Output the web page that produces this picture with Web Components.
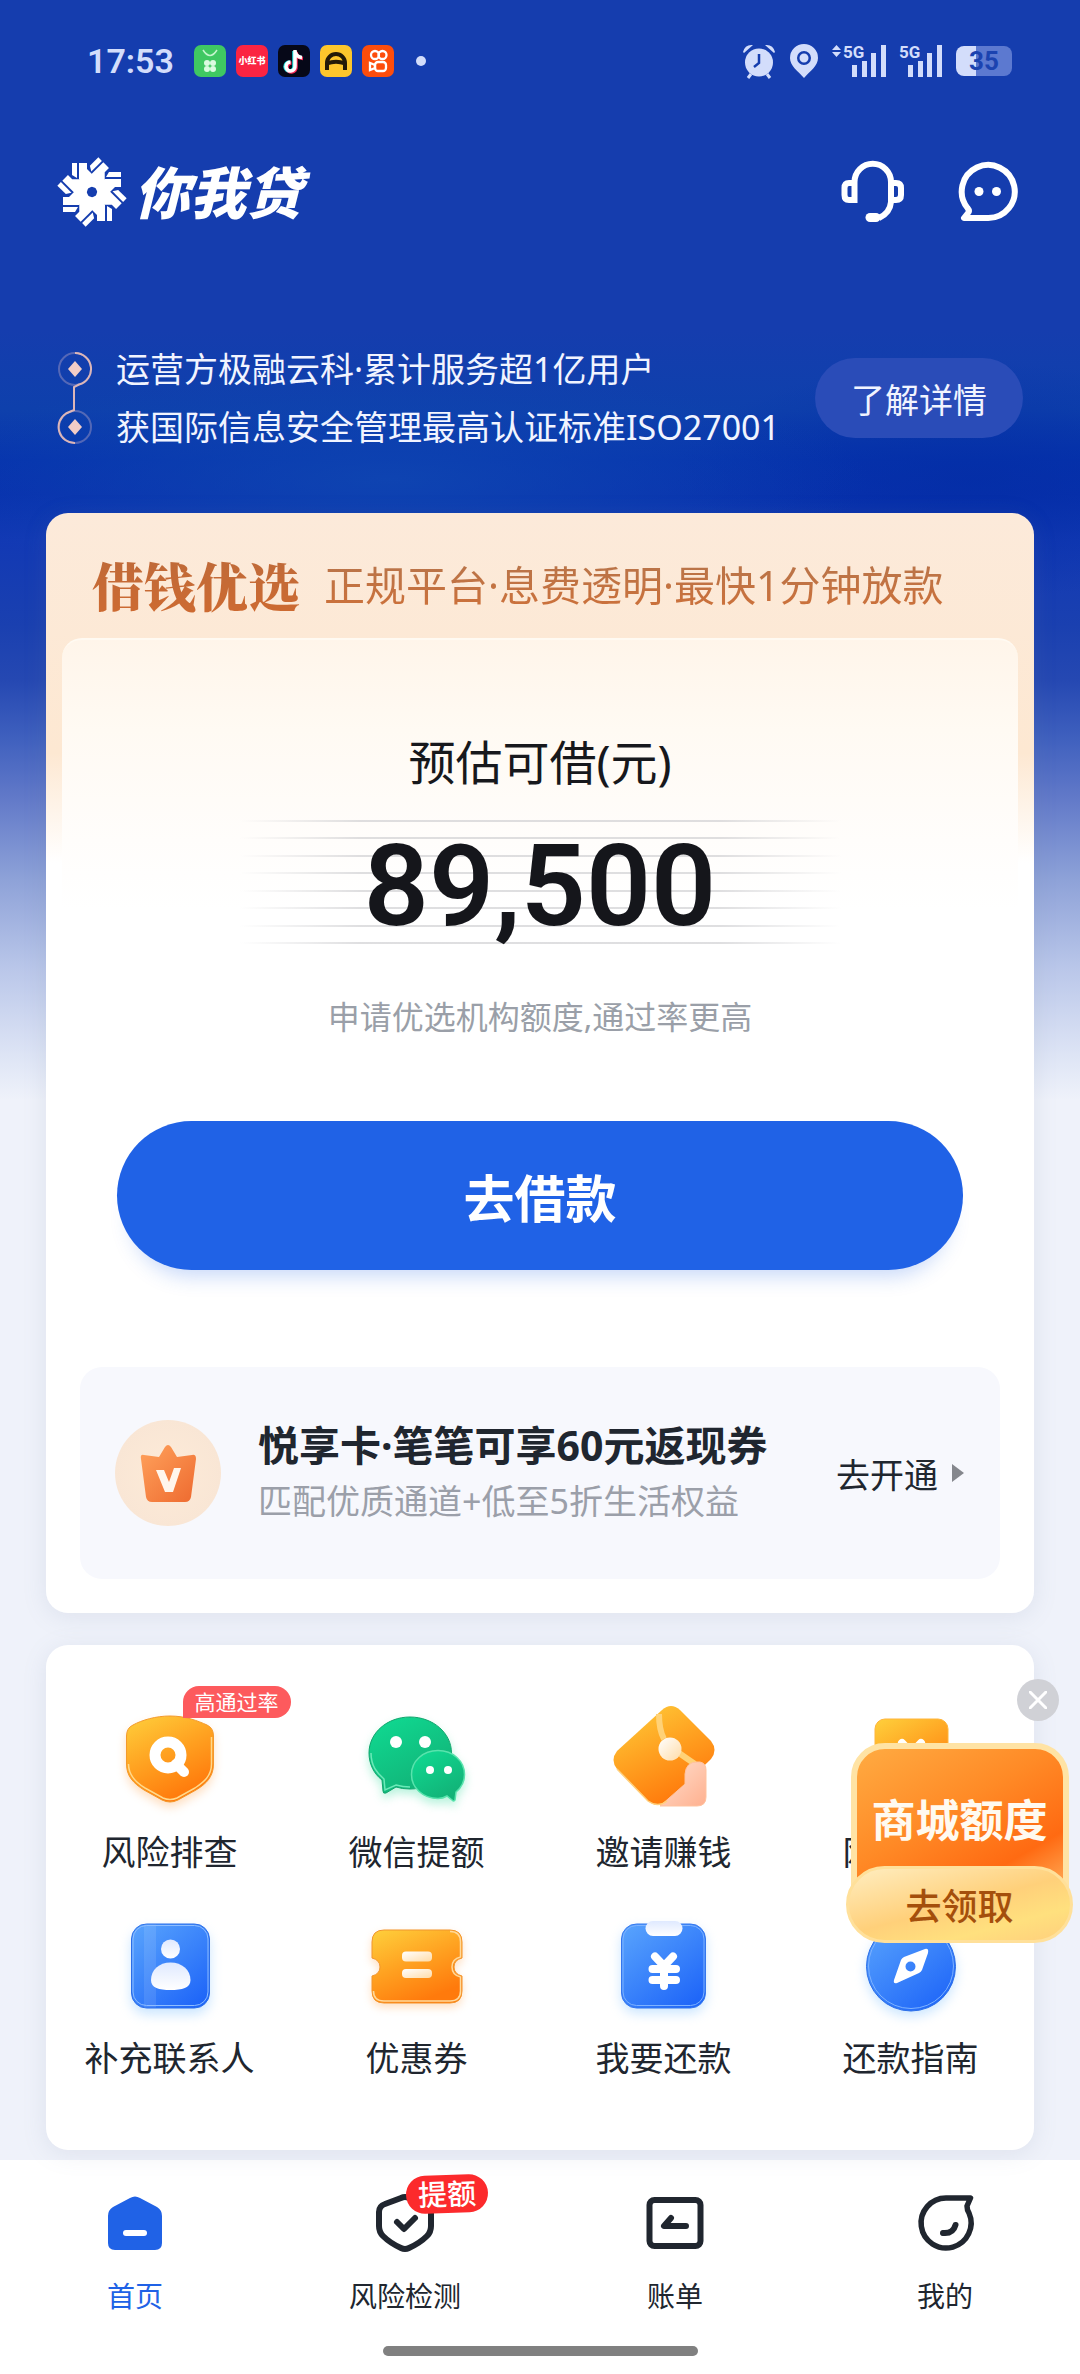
<!DOCTYPE html>
<html lang="zh-CN">
<head>
<meta charset="utf-8">
<meta name="viewport" content="width=device-width, initial-scale=1">
<title>你我贷</title>
<style>
	html, body { margin: 0; }
	body {
		min-height: 100vh;
		background: #eff2fa;
		color: #20262f;
		font-family: "Noto Sans", "Noto Sans CJK SC", sans-serif;
		font-size: 34px;
	}
</style>
</head>
<body>
<loan-home></loan-home>

<script>
(function() {
	function define(name, html) {
		let template = document.createElement("template");
		template.innerHTML = html;
		customElements.define(name, class extends HTMLElement {
			constructor() {
				super();
				this.attachShadow({mode: "open"}).appendChild(template.content.cloneNode(true));
			}
		});
	}

	/* ---------- shared gradients for the service icons ---------- */

	const defs = `
		<defs>
			<linearGradient id="gold" x1="0" y1="0" x2=".5" y2="1">
				<stop offset="0" stop-color="#fed03c"/><stop offset=".5" stop-color="#ffa422"/><stop offset="1" stop-color="#ff7a0c"/>
			</linearGradient>
			<linearGradient id="blue" x1="0" y1="0" x2=".8" y2="1">
				<stop offset="0" stop-color="#5aa5fd"/><stop offset="1" stop-color="#1f66f8"/>
			</linearGradient>
			<linearGradient id="green" x1="0" y1="0" x2=".6" y2="1">
				<stop offset="0" stop-color="#0fdc93"/><stop offset="1" stop-color="#12b277"/>
			</linearGradient>
			<linearGradient id="pale" x1="0" y1="0" x2="0" y2="1">
				<stop offset="0" stop-color="#dfe9ff"/><stop offset="1" stop-color="#ffffff"/>
			</linearGradient>
			<linearGradient id="peach" x1="0" y1="0" x2="1" y2="1">
				<stop offset="0" stop-color="#ffe0cf"/><stop offset="1" stop-color="#ffb08f"/>
			</linearGradient>
			<linearGradient id="cream" x1="0" y1="0" x2="1" y2="1">
				<stop offset="0" stop-color="#ffffff"/><stop offset="1" stop-color="#ffdca8"/>
			</linearGradient>
		</defs>`;

	const icons = {
		shield: `
			<g style="filter:drop-shadow(0 5px 5px #ffb26a66)">
				<path d="M54 10C70 10 82 15 91 19Q97.500 22 97.500 30V58C97.500 71 90 78 80 84L62 94Q54 98 46 94L28 84C17 77 10.500 70 10.500 58V30Q10.500 22 17 19C26 14 40 10 54 10Z" fill="url(#gold)" stroke="#f39a2c"/>
				<path d="M95.500 31V58C95.500 70 88 76 79 82L61 92Q54 95 47 92L29 82C19 76 12.500 69 12.500 58" fill="none" stroke="#ffd98a" stroke-width="1.500"/>
			</g>
			<circle cx="52" cy="49" r="13" fill="none" stroke="#fff" stroke-width="11"/>
			<path d="M60 58L68 66" stroke="#fff" stroke-width="10" stroke-linecap="round"/>`,
		chat: `
			<g style="filter:drop-shadow(0 5px 5px #4fe0a966)">
				<path d="M47 11C70 11 88.500 27 88.500 47S70 83 47 83Q39 83 33 81L23 87Q20 88 20 85L19 74C11 68 6 58 6 47C6 27 24 11 47 11Z" fill="url(#green)" stroke="#12a56d"/>
				<path d="M8 47C8 60 14 67 21 73L22 84L33 79Q40 81 47 81" fill="none" stroke="#6be9b8" stroke-width="1.500"/>
				<path d="M75 44.500C90 44.500 101.500 55 101.500 68.500Q101.500 79 93 86L92 94Q91 96 89 94L84 90Q80 92.500 75 92.500C60 92.500 48.500 82 48.500 68.500S60 44.500 75 44.500Z" fill="url(#green)" stroke="#59e3ad" stroke-width="1.500"/>
			</g>
			<g fill="#fff"><circle cx="33" cy="36" r="6"/><circle cx="62" cy="36" r="6"/><circle cx="67" cy="64" r="4"/><circle cx="85" cy="64" r="4"/></g>`,
		invite: `
			<path d="M52 4Q61 -4 70 4L101 35Q108 44 101 53L58 95Q48 103 38 95L7 63Q0 54 7 45Z" fill="url(#gold)"/>
			<path d="M49 8Q49 24 54 33M69 47Q76 52 85 58" fill="none" stroke="#ffd277" stroke-width="6"/>
			<path d="M50 100L75 78V68Q76 56 87 56H90Q96 57 96 64V91Q96 100 87 100Z" fill="url(#peach)" stroke="#ffc39f"/>
			<path d="M7 63L38 95Q48 102 57 95" fill="none" stroke="#ffd07c" stroke-width="1.500"/>
			<circle cx="60" cy="43" r="11.500" fill="url(#cream)"/>`,
		wallet: `
			<rect x="18" y="13" width="73" height="80" rx="10" fill="url(#gold)" stroke="#ffb53a"/>
			<path d="M45 37L54.500 47L64 37M54.500 47V72M42 51H67M42 61H67" fill="none" stroke="#fff" stroke-width="8" stroke-linecap="round"/>`,
		contact: `
			<g style="filter:drop-shadow(0 6px 6px #7ec0ff66)">
				<rect x="15.500" y="12" width="78" height="84" rx="15" fill="url(#blue)" stroke="#2b6ee8"/>
				<path d="M28 12.500H40V95.500H28Z" fill="#fff" opacity=".1"/>
				<rect x="17" y="13.500" width="75" height="80" rx="13.500" fill="none" stroke="#8dbdff"/>
			</g>
			<circle cx="54.500" cy="37" r="9.500" fill="url(#pale)"/>
			<path d="M54.500 50.500C66 50.500 74.500 58 74.500 68C74.500 76 66 78 54.500 78S35 76 35 68C35 58 43 50.500 54.500 50.500Z" fill="url(#pale)"/>`,
		coupon: `
			<g style="filter:drop-shadow(0 4px 4px #ffb26a66)">
				<path d="M21 18H87Q99 18 99 30V46Q91 48 91 55T99 64V79Q99 91 87 91H21Q9 91 9 79V64Q17 62 17 55T9 46V30Q9 18 21 18Z" fill="url(#gold)" stroke="#f2952c"/>
				<path d="M87 19.500Q97.500 19.500 97.500 30V45Q89 47 89 55T97.500 65V79Q97.500 89 87 89H21Q10.500 89 10.500 79" fill="none" stroke="#ffd99a" stroke-width="1.500"/>
			</g>
			<rect x="39" y="39.500" width="30" height="10" rx="4" fill="url(#cream)"/>
			<rect x="39" y="57" width="30" height="9" rx="4" fill="url(#cream)"/>`,
		repay: `
			<g style="filter:drop-shadow(0 5px 6px #7ec0ff66)">
				<rect x="11.500" y="12" width="84" height="84" rx="15" fill="url(#blue)" stroke="#3376ee"/>
				<rect x="13" y="13.500" width="81" height="80" rx="13.500" fill="none" stroke="#7db2ff"/>
			</g>
			<rect x="35.500" y="9" width="37" height="15" rx="7.500" fill="url(#pale)"/>
			<path d="M45 44.500L54 54L63 44.500M54 54V74M42.500 57H66M42.500 68H66" fill="none" stroke="#fff" stroke-width="8" stroke-linecap="round" stroke-linejoin="round"/>`,
		compass: `
			<g style="filter:drop-shadow(0 5px 6px #7ec0ff66)">
				<circle cx="54" cy="54.500" r="44.500" fill="url(#blue)" stroke="#2b6ee8"/>
				<circle cx="54" cy="54" r="42.500" fill="none" stroke="#7db2ff"/>
			</g>
			<path fill-rule="evenodd" d="M68 37Q72 36 71 41L65 58Q64 60 62 61L40 71Q36 72 37 68L44 48Q45 46 47 45ZM53.500 49.500A5 5 0 1 0 53.500 59.500A5 5 0 1 0 53.500 49.500Z" fill="#fff"/>`,
		home: `
			<path d="M25 5Q30 2 35 5L52 14Q57 17 57 23V50Q57 57 50 57H10Q3 57 3 50V23Q3 17 8 14Z" fill="currentColor"/>
			<path d="M21 40H39" stroke="#fff" stroke-width="6" stroke-linecap="round"/>`,
		check: `
			<path d="M26 5Q30 3 34 5L50 11Q56 13 56 19V33Q56 39 52 43Q45 50 34 55Q30 57 26 55Q15 50 8 43Q4 39 4 33V19Q4 13 10 11Z" fill="none" stroke="currentColor" stroke-width="6"/>
			<path d="M22 29L29 36L40 25" fill="none" stroke="currentColor" stroke-width="6" stroke-linecap="round" stroke-linejoin="round"/>`,
		bill: `
			<rect x="4.500" y="7" width="51" height="46" rx="5" fill="none" stroke="currentColor" stroke-width="6"/>
			<path d="M26 25L19 33H41" fill="none" stroke="currentColor" stroke-width="6" stroke-linecap="round" stroke-linejoin="round"/>`,
		mine: `
			<path d="M55.500 5H31A25 25 0 1 0 54 20Q52 17 52 13Z" fill="none" stroke="currentColor" stroke-width="5.500" stroke-linejoin="round"/>
			<path d="M28 40Q38 41 40.500 32" fill="none" stroke="currentColor" stroke-width="6" stroke-linecap="round"/>`
	};

	/* ---------- icon, picked by name ---------- */

	class UiIcon extends HTMLElement {
		constructor() {
			super();
			this.attachShadow({mode: "open"});
		}

		connectedCallback() {
			let box = this.getAttribute("box") || "108";
			this.shadowRoot.innerHTML = `
				<style>
				:host { display: block; }
				svg { display: block; width: 100%; height: 100%; overflow: visible; }
				</style>
				<svg viewBox="0 0 ${box} ${box}" aria-hidden="true">${box === "108" ? defs : ""}${icons[this.getAttribute("name")]}</svg>`;
		}
	}
	customElements.define("ui-icon", UiIcon);

	/* ---------- phone status bar ---------- */

	define("status-bar", `
		<style>
		:host {
			display: flex;
			align-items: center;
			height: 122px;
			padding: 0 68px 0 87px;
			color: #d3ddfb;
			box-sizing: border-box;
		}
		time { font: 600 34px/40px Roboto, sans-serif; margin-right: 20px; }
		.apps { display: flex; gap: 10px; flex: 1; align-items: center; }
		.apps svg { width: 32px; height: 32px; }
		.red {
			width: 32px;
			height: 32px;
			border-radius: 7px;
			background: #fb2442;
			color: #fff;
			font-size: 9px;
			font-weight: 900;
			line-height: 32px;
			text-align: center;
		}
		.dot { width: 10px; height: 10px; margin-left: 12px; border-radius: 50%; background: currentColor; }
		.sys { display: flex; gap: 14px; align-items: center; }
		.sys svg { display: block; overflow: visible; }
		.battery {
			width: 56px;
			height: 30px;
			border-radius: 8px;
			background: linear-gradient(90deg, #d3ddfb 20px, #5c79d0 20px);
			color: #1b43b0;
			font: 700 26px/30px Roboto, sans-serif;
			text-align: center;
		}
		</style>
		<time>17:53</time>
		<div class="apps">
			<svg viewBox="0 0 32 32"><rect width="32" height="32" rx="7" fill="#3fc862"/><path d="M9 5Q16 16 23 5" fill="none" stroke="#c4f5cd" stroke-width="1.500"/><g fill="#d9fbe0"><circle cx="13" cy="18" r="3"/><circle cx="19" cy="18" r="3"/><circle cx="13" cy="24" r="3"/><circle cx="19" cy="24" r="3"/></g></svg>
			<span class="red">小红书</span>
			<svg viewBox="0 0 32 32"><rect width="32" height="32" rx="7" fill="#060818"/><path d="M17 6V21A4.500 4.500 0 1 1 12.500 17M17 6Q18 12 24 12.500" fill="none" stroke="#25e8e4" stroke-width="3.500" transform="translate(-1 0)"/><path d="M17 6V21A4.500 4.500 0 1 1 12.500 17M17 6Q18 12 24 12.500" fill="none" stroke="#fb2b58" stroke-width="3.500" transform="translate(1 1)"/><path d="M17 5V21A4.500 4.500 0 1 1 12.500 17M17 6Q18 12 24 12.500" fill="none" stroke="#fff" stroke-width="3.500"/></svg>
			<svg viewBox="0 0 32 32"><rect width="32" height="32" rx="7" fill="#fdc62c"/><path d="M7 25V18A9 9 0 0 1 25 18V25M7 18.500Q16 15 25 18.500" fill="none" stroke="#241a08" stroke-width="4"/></svg>
			<svg viewBox="0 0 32 32"><rect width="32" height="32" rx="7" fill="#fd4d0c"/><g fill="none" stroke="#fff" stroke-width="2.300"><circle cx="13" cy="10" r="4"/><circle cx="20.500" cy="10" r="4"/><rect x="13" y="17" width="11" height="9" rx="3"/><path d="M13 20L8 18V25L13 23Z"/></g></svg>
			<span class="dot"></span>
		</div>
		<div class="sys">
			<svg width="34" height="34" viewBox="0 0 34 34"><g fill="currentColor"><circle cx="17" cy="18.500" r="14"/><path d="M1 8Q3 0 11 1L2 9ZM33 8Q31 0 23 1L32 9Z"/></g><path d="M9 30L6 34M25 30L28 34" stroke="currentColor" stroke-width="3"/><path d="M17 10V19L12 23" fill="none" stroke="#153dae" stroke-width="2.500"/></svg>
			<svg width="28" height="34" viewBox="0 0 28 34"><path fill-rule="evenodd" d="M14 0A14 14 0 0 1 28 14C28 22 20 27 14 34C8 27 0 22 0 14A14 14 0 0 1 14 0ZM14 7A7 7 0 1 0 14 21A7 7 0 1 0 14 7ZM14 9.500A4.500 4.500 0 1 1 14 18.500A4.500 4.500 0 1 1 14 9.500Z" fill="currentColor"/></svg>
			<svg width="54" height="34" viewBox="0 0 54 34" fill="currentColor"><path d="M4.500 1L9 6H0ZM4.500 13L0 8H9Z"/><text x="11" y="14" font-family="Roboto, sans-serif" font-size="17" font-weight="700">5G</text><path d="M20 21H25V33H20ZM30 17H35V33H30ZM39 9H44V33H39ZM49 1H54V33H49Z"/></svg>
			<svg width="42" height="34" viewBox="0 0 42 34" fill="currentColor"><text x="-1" y="14" font-family="Roboto, sans-serif" font-size="17" font-weight="700">5G</text><path d="M8 21H13V33H8ZM18 17H23V33H18ZM27 9H32V33H27ZM37 1H42V33H37Z"/></svg>
			<div class="battery">35</div>
		</div>
	`);

	/* ---------- brand row ---------- */

	define("brand-header", `
		<style>
		:host {
			display: flex;
			align-items: center;
			height: 72px;
			padding: 34px 60px 0 56px;
			color: #fff;
		}
		h1 {
			flex: 1;
			margin: 0 0 0 6px;
			font-size: 56px;
			font-weight: 900;
			font-style: italic;
			line-height: 72px;
		}
		nav { display: flex; gap: 51px; }
		button { width: 64px; height: 64px; padding: 0; border: 0; background: none; color: inherit; }
		svg { display: block; }
		</style>
		<svg width="72" height="72" viewBox="-36 -36 72 72" fill="#fff" aria-hidden="true">
			<defs><g id="arm"><path d="M-20 -29H-15V-14L-20 -17Z"/><path d="M-13 -29H-5V-23L3 -15V-7L-5 -3L-13 -13Z"/></g></defs>
			<use href="#arm"/><use href="#arm" transform="rotate(45)"/><use href="#arm" transform="rotate(90)"/><use href="#arm" transform="rotate(135)"/>
			<use href="#arm" transform="rotate(180)"/><use href="#arm" transform="rotate(225)"/><use href="#arm" transform="rotate(270)"/><use href="#arm" transform="rotate(315)"/>
		</svg>
		<h1>你我贷</h1>
		<nav>
			<button type="button" aria-label="客服">
				<svg width="64" height="64" viewBox="0 0 64 64" fill="none" stroke="currentColor" stroke-width="6"><path d="M13.500 43V22A18 18 0 0 1 50 22V42Q49 53 38 58"/><path d="M13.500 23H8Q3.500 23 3.500 28V35Q3.500 40 8 40H13.500M50 23H55Q60 23 60 28V35Q60 40 55 40H50"/><path d="M29 57.500H35" stroke-width="9" stroke-linecap="round"/></svg>
			</button>
			<button type="button" aria-label="消息">
				<svg width="64" height="64" viewBox="0 0 64 64"><path d="M32 58A26.500 26.500 0 1 0 11.500 48Q14 51 12 53L8 58Z" fill="none" stroke="currentColor" stroke-width="6" stroke-linejoin="round"/><circle cx="23" cy="31.500" r="4.500" fill="currentColor"/><circle cx="40.500" cy="31.500" r="4.500" fill="currentColor"/></svg>
			</button>
		</nav>
	`);

	/* ---------- operator statement ---------- */

	define("trust-banner", `
		<style>
		:host {
			display: flex;
			align-items: center;
			padding: 112px 57px 57px;
			color: #f1f4ff;
		}
		ul { flex: 1; margin: 0 0 0 23px; padding: 0; list-style: none; font-size: 34px; line-height: 58px; white-space: nowrap; }
		button {
			width: 208px;
			height: 80px;
			border: 0;
			border-radius: 40px;
			background: #2a4cb8;
			color: inherit;
			font: inherit;
		}
		</style>
		<svg width="36" height="116" viewBox="0 0 36 116" fill="none" aria-hidden="true">
			<g stroke="#a99bc4" stroke-width="2"><circle cx="18" cy="29" r="16" opacity=".45"/><circle cx="18" cy="87" r="16" opacity=".45"/><path d="M18 13A16 16 0 0 1 22 44.500L17 47V70L9 73.500A16 16 0 0 0 18 103" stroke="#dcb6b8"/></g>
			<path d="M18 21L25 29L18 37L11 29ZM18 79L25 87L18 95L11 87Z" fill="#f3cdc7"/>
		</svg>
		<ul>
			<li>运营方极融云科·累计服务超1亿用户</li>
			<li>获国际信息安全管理最高认证标准ISO27001</li>
		</ul>
		<button type="button">了解详情</button>
	`);

	/* ---------- loan offer ---------- */

	define("loan-card", `
		<style>
		:host {
			display: block;
			margin: 0 46px;
			padding-bottom: 34px;
			border-radius: 22px;
			background: linear-gradient(#fceada 0, #fde8d2 240px, #ffffff 350px);
			box-shadow: 0 4px 24px #7080a022;
		}
		header {
			display: flex;
			align-items: center;
			gap: 24px;
			height: 107px;
			padding: 18px 46px 0;
			white-space: nowrap;
		}
		h2, p { margin: 0; background: linear-gradient(#bd6a3a, #cf6a30); background-clip: text; -webkit-background-clip: text; color: transparent; }
		h2 { font: 900 52px/72px "Noto Serif CJK SC", "Noto Serif SC", "Noto Sans CJK SC", serif; }
		header p { font-size: 41px; line-height: 60px; background-image: linear-gradient(#b5754c, #cf7038); }
		.panel {
			display: flex;
			flex-direction: column;
			align-items: center;
			margin: 0 16px;
			padding-top: 90px;
			border-top: 2px solid #fffaf2;
			border-radius: 20px 20px 0 0;
			background: linear-gradient(#fff5ea 0, #fffaf3 90px, #fffdfb 200px, #ffffff 270px);
		}
		.label { color: #17181c; font-size: 47px; line-height: 64px; }
		.amount {
			display: grid;
			place-items: center;
			width: 601px;
			max-width: 100%;
			height: 124px;
			margin: 26px 0 51px;
		}
		.amount > * { grid-area: 1 / 1; }
		.amount strong { padding-top: 8px; color: #15161b; font: 600 114px/116px Roboto, sans-serif; }
		.tip { color: #9a9fa8; font-size: 32px; line-height: 44px; }
		.go {
			align-self: stretch;
			height: 149px;
			margin: 82px 55px 97px;
			border: 0;
			border-radius: 75px;
			background: #2062e6;
			box-shadow: 0 20px 20px -14px #2062e640;
			color: #fff;
			font: inherit;
			font-size: 51px;
			font-weight: 700;
		}
		</style>
		<header>
			<h2>借钱优选</h2>
			<p>正规平台·息费透明·最快1分钟放款</p>
		</header>
		<div class="panel">
			<span class="label">预估可借(元)</span>
			<div class="amount">
				<svg width="601" height="124" viewBox="0 0 601 124" aria-hidden="true">
					<defs><linearGradient id="fade"><stop offset="0" stop-color="#c9c9cc" stop-opacity="0"/><stop offset=".2" stop-color="#c9c9cc" stop-opacity=".6"/><stop offset=".8" stop-color="#c9c9cc" stop-opacity=".6"/><stop offset="1" stop-color="#c9c9cc" stop-opacity="0"/></linearGradient></defs>
					<path fill="url(#fade)" d="M0 0H601V2H0ZM0 17H601V19H0ZM0 35H601V37H0ZM0 52H601V54H0ZM0 70H601V72H0ZM0 87H601V89H0ZM0 105H601V107H0ZM0 122H601V124H0Z"/>
				</svg>
				<strong>89,500</strong>
			</div>
			<span class="tip">申请优选机构额度,通过率更高</span>
			<button class="go" type="button">去借款</button>
		</div>
		<slot></slot>
	`);

	define("member-card", `
		<style>
		:host {
			display: flex;
			align-items: center;
			height: 212px;
			margin: 0 34px;
			padding: 0 36px 0 35px;
			border-radius: 22px;
			background: #f7f8fd;
			box-sizing: border-box;
			white-space: nowrap;
		}
		div { flex: 1; margin-left: 37px; }
		h3, p { margin: 0; }
		h3 { font-size: 41px; font-weight: 700; line-height: 56px; }
		p { color: #9b9fa9; font-size: 34px; line-height: 56px; }
		a { display: flex; align-items: center; gap: 14px; color: inherit; font-size: 34px; text-decoration: none; }
		</style>
		<svg width="106" height="106" viewBox="0 0 106 106" aria-hidden="true">
			<defs>
				<radialGradient id="disc"><stop offset="0" stop-color="#fdebd8"/><stop offset="1" stop-color="#f9e6d5"/></radialGradient>
				<linearGradient id="crown" x1="0" y1="0" x2="1" y2="1"><stop offset="0" stop-color="#ffa25c"/><stop offset="1" stop-color="#ee6a2f"/></linearGradient>
			</defs>
			<circle cx="53" cy="53" r="53" fill="url(#disc)"/>
			<path d="M50 27Q53 23 56 27L62 37L77 35Q81 34 81 39L76 77Q75 82 70 82H37Q32 82 31 77L26 39Q25 34 29 35L44 37Z" fill="url(#crown)"/>
			<path d="M41 50H49L54 62L59 48H66L58 72H50Z" fill="#fff6ec"/>
		</svg>
		<div>
			<h3>悦享卡·笔笔可享60元返现券</h3>
			<p>匹配优质通道+低至5折生活权益</p>
		</div>
		<a href="#member">去开通<svg width="12" height="18" viewBox="0 0 12 18"><path d="M0 0L12 9L0 18Z" fill="#85878d"/></svg></a>
	`);

	/* ---------- service grid ---------- */

	define("service-item", `
		<style>
		:host { display: block; min-width: 0; }
		a { display: flex; flex-direction: column; align-items: center; gap: 14px; color: inherit; text-decoration: none; }
		.pic { position: relative; width: 108px; height: 108px; }
		.label { font-size: 34px; line-height: 48px; white-space: nowrap; }
		::slotted([slot=badge]) {
			position: absolute;
			left: 67px;
			top: -20px;
			padding: 0 12px;
			border-radius: 16px 16px 16px 0;
			background: #fd5a5d;
			color: #fff;
			font-size: 21px;
			line-height: 32px;
			white-space: nowrap;
		}
		</style>
		<a href="#service"><span class="pic"><slot name="icon"></slot><slot name="badge"></slot></span><span class="label"><slot></slot></span></a>
	`);

	define("service-grid", `
		<style>
		:host {
			display: grid;
			grid-template-columns: repeat(4, 1fr);
			row-gap: 36px;
			margin: 32px 46px 10px;
			padding: 61px 0 68px;
			border-radius: 22px;
			background: #fff;
			box-shadow: 0 4px 24px #7080a022;
		}
		</style>
		<slot></slot>
	`);

	/* ---------- floating promotion, lies over the grid ---------- */

	define("promo-float", `
		<style>
		:host {
			position: absolute;
			top: 66px;
			right: 7px;
			display: flex;
			flex-direction: column;
			align-items: center;
			width: 227px;
		}
		button { padding: 0; border: 0; font: inherit; }
		.close {
			align-self: flex-end;
			width: 42px;
			height: 42px;
			margin: 0 14px 22px 0;
			border-radius: 50%;
			background: #d0d1d6;
		}
		svg { display: block; margin: auto; }
		.box {
			width: 218px;
			height: 180px;
			padding-bottom: 24px;
			border: 6px solid #ffe3a4;
			border-radius: 34px;
			background: linear-gradient(150deg, #ffab42 0, #ff8a26 40%, #ff6a12 70%, #ff9a45 85%);
			box-sizing: border-box;
			color: #fffaf0;
			font-size: 44px;
			font-weight: 700;
			line-height: 142px;
			text-align: center;
			white-space: nowrap;
		}
		.get {
			width: 227px;
			height: 77px;
			margin-top: -57px;
			border: 3px solid #ffe09a;
			border-radius: 39px;
			background: linear-gradient(165deg, #ffedc0 0, #ffd07a 50%, #ffe07e 75%, #ffcf7c 100%);
			color: #a44f0c;
			font-size: 36px;
			font-weight: 500;
		}
		</style>
		<button class="close" type="button" aria-label="关闭"><svg width="18" height="18" viewBox="0 0 18 18"><path d="M1 1L17 17M17 1L1 17" stroke="#fff" stroke-width="3" stroke-linecap="round"/></svg></button>
		<div class="box">商城额度</div>
		<button class="get" type="button">去领取</button>
	`);

	/* ---------- bottom tabs ---------- */

	define("tab-item", `
		<style>
		:host { flex: 1; display: block; }
		:host([active]) { color: #2062e6; }
		a { display: flex; flex-direction: column; align-items: center; gap: 23px; color: inherit; text-decoration: none; }
		.pic { position: relative; width: 60px; height: 60px; }
		.label { font-size: 28px; line-height: 40px; }
		::slotted([slot=badge]) {
			position: absolute;
			left: 31px;
			top: -18px;
			padding: 0 12px;
			border-radius: 20px;
			background: #fc2a2c;
			color: #fff;
			font-size: 29px;
			font-weight: 500;
			line-height: 38px;
			white-space: nowrap;
			transform: rotate(-2deg);
		}
		</style>
		<a href="#tab"><span class="pic"><slot name="icon"></slot><slot name="badge"></slot></span><span class="label"><slot></slot></span></a>
	`);

	define("tab-bar", `
		<style>
		:host { display: block; padding: 33px 0 18px; background: #fff; }
		nav { display: flex; }
		.handle { width: 315px; height: 10px; margin: 30px auto 0; border-radius: 5px; background: #808080; }
		</style>
		<nav><slot></slot></nav>
		<div class="handle"></div>
	`);

	/* ---------- page ---------- */

	define("loan-home", `
		<style>
		:host {
			display: block;
			background:
				radial-gradient(ellipse 480px 110px at 36% 480px, #1048b2cc, #1048b200),
				radial-gradient(ellipse 300px 120px at 90% 480px, #032ca4aa, #032ca400),
				linear-gradient(#153dae 0, #153dae 330px, #0e40ac 410px, #0633ad 460px, #0831ae 495px, #1239b4 540px, #1a40b0 625px, #2548b2 680px, #3f60be 738px, #6078c8 795px, #8ea2d8 880px, #b9c6e9 967px, #dde4f5 1054px, #eff2fa 1100px);
		}
		section { position: relative; display: flow-root; }
		</style>
		<status-bar></status-bar>
		<brand-header></brand-header>
		<trust-banner></trust-banner>
		<loan-card><member-card></member-card></loan-card>
		<section>
			<service-grid>
				<service-item><ui-icon slot="icon" name="shield"></ui-icon><span slot="badge">高通过率</span>风险排查</service-item>
				<service-item><ui-icon slot="icon" name="chat"></ui-icon>微信提额</service-item>
				<service-item><ui-icon slot="icon" name="invite"></ui-icon>邀请赚钱</service-item>
				<service-item><ui-icon slot="icon" name="wallet"></ui-icon>网购优惠</service-item>
				<service-item><ui-icon slot="icon" name="contact"></ui-icon>补充联系人</service-item>
				<service-item><ui-icon slot="icon" name="coupon"></ui-icon>优惠券</service-item>
				<service-item><ui-icon slot="icon" name="repay"></ui-icon>我要还款</service-item>
				<service-item><ui-icon slot="icon" name="compass"></ui-icon>还款指南</service-item>
			</service-grid>
			<promo-float></promo-float>
		</section>
		<tab-bar>
			<tab-item active><ui-icon slot="icon" box="60" name="home"></ui-icon>首页</tab-item>
			<tab-item><ui-icon slot="icon" box="60" name="check"></ui-icon><span slot="badge">提额</span>风险检测</tab-item>
			<tab-item><ui-icon slot="icon" box="60" name="bill"></ui-icon>账单</tab-item>
			<tab-item><ui-icon slot="icon" box="60" name="mine"></ui-icon>我的</tab-item>
		</tab-bar>
	`);
})();
</script>
</body>
</html>
